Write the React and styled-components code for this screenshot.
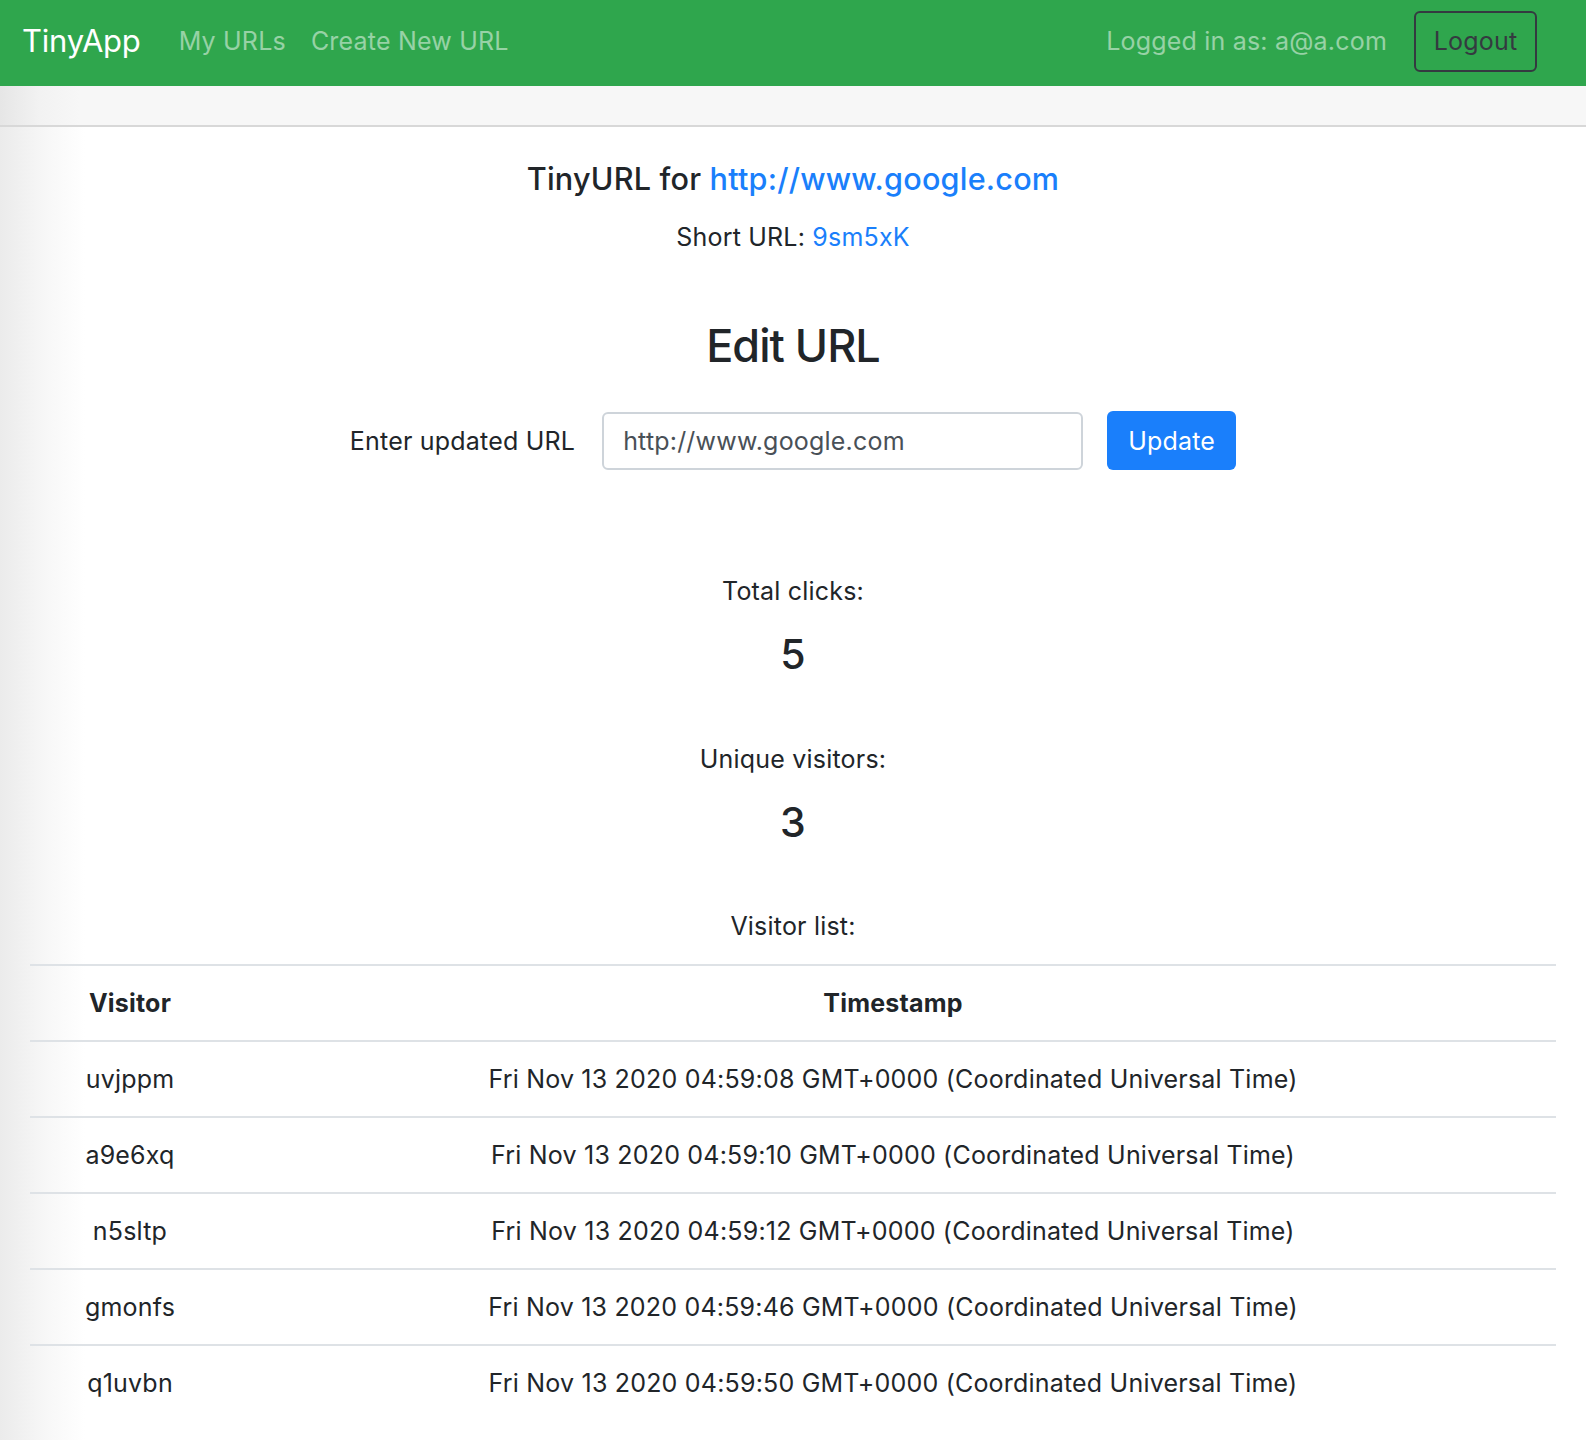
import React from "react";
import styled, { createGlobalStyle } from "styled-components";

const visits = [
  { id: "uvjppm", time: "Fri Nov 13 2020 04:59:08 GMT+0000 (Coordinated Universal Time)" },
  { id: "a9e6xq", time: "Fri Nov 13 2020 04:59:10 GMT+0000 (Coordinated Universal Time)" },
  { id: "n5sltp", time: "Fri Nov 13 2020 04:59:12 GMT+0000 (Coordinated Universal Time)" },
  { id: "gmonfs", time: "Fri Nov 13 2020 04:59:46 GMT+0000 (Coordinated Universal Time)" },
  { id: "q1uvbn", time: "Fri Nov 13 2020 04:59:50 GMT+0000 (Coordinated Universal Time)" },
];

export default function App() {
  return (
    <>
      <GlobalStyle />
      <Nav>
        <Brand>TinyApp</Brand>
        <NavLink>My URLs</NavLink>
        <NavLink>Create New URL</NavLink>
        <NavRight>
          <NavText>Logged in as: a@a.com</NavText>
          <LogoutButton>Logout</LogoutButton>
        </NavRight>
      </Nav>
      <Band />
      <Main>
        <Title>
          TinyURL for <Link>http://www.google.com</Link>
        </Title>
        <Text top="22px">
          Short URL: <Link>9sm5xK</Link>
        </Text>
        <Heading>Edit URL</Heading>
        <Form>
          <Label>Enter updated URL</Label>
          <Input defaultValue="http://www.google.com" />
          <UpdateButton>Update</UpdateButton>
        </Form>
        <Text top="103px">Total clicks:</Text>
        <Count>5</Count>
        <Text top="62px">Unique visitors:</Text>
        <Count>3</Count>
        <Text top="61px">Visitor list:</Text>
        <Table>
          <thead>
            <tr>
              <Th width="200px">Visitor</Th>
              <Th>Timestamp</Th>
            </tr>
          </thead>
          <tbody>
            {visits.map((v) => (
              <tr key={v.id}>
                <Td>{v.id}</Td>
                <Td>{v.time}</Td>
              </tr>
            ))}
          </tbody>
        </Table>
      </Main>
    </>
  );
}

const GlobalStyle = createGlobalStyle`
  body {
    margin: 0;
    font-family: Inter, "Noto Sans", sans-serif;
    font-size: 25px;
    letter-spacing: 0.2px;
    color: #212529;
    background: linear-gradient(to right, #ebebeb 0, #f8f8f8 50px, #ffffff 85px);
    min-height: 1440px;
  }
`;

const Nav = styled.nav`
  display: flex;
  align-items: center;
  height: 86px;
  padding: 0 49px 4px 22px;
  background-color: #2fa64d;
  box-sizing: border-box;
`;

const Brand = styled.a`
  font-size: 31px;
  letter-spacing: -0.2px;
  color: #fff;
  margin-right: 38px;
  margin-top: -2px;
`;

const NavLink = styled.a`
  color: rgba(255, 255, 255, 0.5);
  margin-right: 25px;
`;

const NavRight = styled.div`
  margin-left: auto;
  display: flex;
  align-items: center;
  gap: 27px;
`;

const NavText = styled.span`
  color: rgba(255, 255, 255, 0.5);
`;

const LogoutButton = styled.button`
  width: 123px;
  height: 61px;
  margin-top: 0;
  font-family: inherit;
  font-size: 25px;
  letter-spacing: 0.2px;
  color: #343a40;
  background: transparent;
  border: 2px solid #343a40;
  border-radius: 6px;
`;

const Band = styled.div`
  height: 39px;
  background: linear-gradient(to right, #e6e6e6 0, #f2f2f2 40px, #f7f7f7 80px);
  border-bottom: 2px solid #d8d8d8;
`;

const Main = styled.main`
  display: flex;
  flex-direction: column;
  align-items: center;
  padding: 34px 30px 0;
`;

const Title = styled.h5`
  margin: 0;
  font-size: 30.6px;
  font-weight: 500;
  line-height: 36px;
`;

const Link = styled.a`
  color: #1a7ffb;
`;

const Text = styled.p`
  margin: ${(p) => p.top} 0 0;
  line-height: 36px;
`;

const Heading = styled.h2`
  margin: 62px 0 0;
  font-size: 45px;
  letter-spacing: -1px;
  font-weight: 500;
  line-height: 58px;
`;

const Form = styled.form`
  display: flex;
  align-items: center;
  margin: 36px 0 0;
`;

const Label = styled.label`
  margin-right: 27px;
`;

const Input = styled.input`
  width: 481px;
  height: 58px;
  box-sizing: border-box;
  padding: 0 19px;
  font-family: inherit;
  font-size: 25px;
  letter-spacing: 0.2px;
  color: #495057;
  border: 2px solid #ced4da;
  border-radius: 6px;
  margin-right: 24px;
`;

const UpdateButton = styled.button`
  width: 129px;
  height: 59px;
  font-family: inherit;
  font-size: 25px;
  letter-spacing: 0.2px;
  color: #fff;
  background-color: #1a7ffb;
  border: none;
  border-radius: 6px;
`;

const Count = styled.h3`
  margin: 20px 0 0;
  font-size: 41px;
  font-weight: 500;
  line-height: 50px;
`;

const Table = styled.table`
  width: 100%;
  margin-top: 20px;
  border-collapse: collapse;
`;

const Th = styled.th`
  width: ${(p) => p.width || "auto"};
  padding: 19px 0;
  line-height: 36px;
  font-weight: 700;
  border-top: 2px solid #dee2e6;
  border-bottom: 2px solid #dee2e6;
  text-align: center;
`;

const Td = styled.td`
  padding: 19px 0;
  line-height: 36px;
  text-align: center;
  border-top: 2px solid #dee2e6;
  thead + tbody tr:first-child & {
    border-top: none;
  }
`;
